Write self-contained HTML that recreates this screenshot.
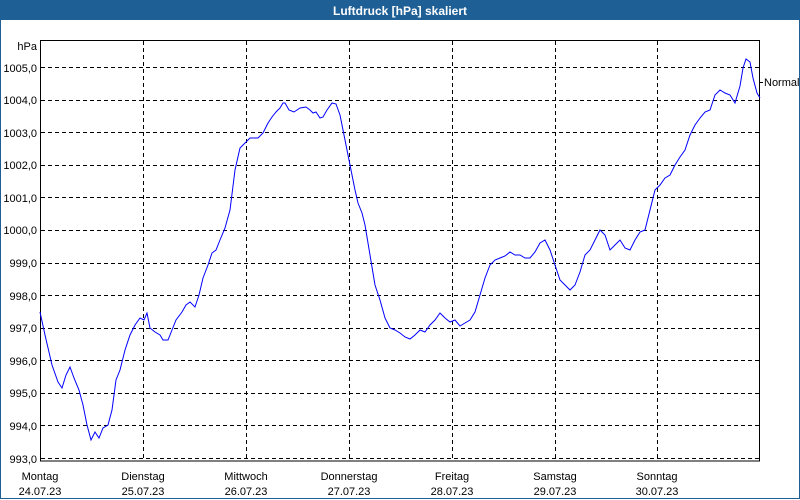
<!DOCTYPE html>
<html><head><style>
body{margin:0;width:800px;height:500px;overflow:hidden;background:#fff;font-family:"Liberation Sans",sans-serif;}
.wrap{position:absolute;left:0;top:0;width:798px;height:498px;border:1px solid #1e5f96;border-top:none;}
</style></head><body>
<div class="wrap"></div>
<svg width="800" height="500" style="position:absolute;left:0;top:0" font-family="Liberation Sans, sans-serif">
<rect x="0" y="0" width="800" height="20" fill="#1e5f96"/>
<text x="400" y="15" text-anchor="middle" fill="#fff" font-size="12" font-weight="bold">Luftdruck [hPa] skaliert</text>
<rect x="40.5" y="40.5" width="719" height="420.5" fill="none" stroke="#000" stroke-width="1"/>
<g stroke="#000" stroke-dasharray="4,3" stroke-width="1">
<line x1="41" x2="760" y1="67.5" y2="67.5"/><line x1="41" x2="760" y1="100.5" y2="100.5"/>
<line x1="41" x2="760" y1="132.5" y2="132.5"/><line x1="41" x2="760" y1="165.5" y2="165.5"/>
<line x1="41" x2="760" y1="197.5" y2="197.5"/><line x1="41" x2="760" y1="230.5" y2="230.5"/>
<line x1="41" x2="760" y1="263.5" y2="263.5"/><line x1="41" x2="760" y1="295.5" y2="295.5"/>
<line x1="41" x2="760" y1="328.5" y2="328.5"/><line x1="41" x2="760" y1="360.5" y2="360.5"/>
<line x1="41" x2="760" y1="393.5" y2="393.5"/><line x1="41" x2="760" y1="425.5" y2="425.5"/>
<line x1="41" x2="760" y1="458.5" y2="458.5"/>
<line x1="143.5" x2="143.5" y1="41" y2="461"/><line x1="246.5" x2="246.5" y1="41" y2="461"/>
<line x1="349.5" x2="349.5" y1="41" y2="461"/><line x1="452.5" x2="452.5" y1="41" y2="461"/>
<line x1="555.5" x2="555.5" y1="41" y2="461"/><line x1="657.5" x2="657.5" y1="41" y2="461"/>
</g>
<line x1="760" x2="763" y1="82.5" y2="82.5" stroke="#000"/>
<g font-size="11" fill="#000" text-anchor="end">
<text x="37" y="50">hPa</text>
<text x="37" y="72">1005,0</text><text x="37" y="104">1004,0</text><text x="37" y="137">1003,0</text>
<text x="37" y="169">1002,0</text><text x="37" y="202">1001,0</text><text x="37" y="234">1000,0</text>
<text x="37" y="267">999,0</text><text x="37" y="300">998,0</text><text x="37" y="332">997,0</text>
<text x="37" y="365">996,0</text><text x="37" y="397">995,0</text><text x="37" y="430">994,0</text>
<text x="37" y="463">993,0</text>
</g>
<text x="764" y="86" font-size="11">Normal</text>
<g font-size="11" text-anchor="middle">
<text x="40" y="480">Montag</text><text x="40" y="495">24.07.23</text>
<text x="143" y="480">Dienstag</text><text x="143" y="495">25.07.23</text>
<text x="246" y="480">Mittwoch</text><text x="246" y="495">26.07.23</text>
<text x="349" y="480">Donnerstag</text><text x="349" y="495">27.07.23</text>
<text x="452" y="480">Freitag</text><text x="452" y="495">28.07.23</text>
<text x="555" y="480">Samstag</text><text x="555" y="495">29.07.23</text>
<text x="657" y="480">Sonntag</text><text x="657" y="495">30.07.23</text>
</g>
<polyline fill="none" stroke="#0000ff" stroke-width="1" points="40,312 45,335 52,365 58,382 62,388 66,375 70,367 74,378 79,390 83,405 87,425 91,440 95,432 99,438 103,428 108,425 112,410 116,380 120,370 125,350 130,335 135,325 140,318 144,320 147,313 150,328 155,332 160,335 163,340 168,340 172,330 176,320 182,312 186,305 190,302 195,307 199,295 203,278 208,265 212,253 216,250 220,240 225,228 230,210 235,170 240,148 245,143 250,138 258,138 263,133 268,123 272,117 276,112 280,108 283,103 285,103 289,110 294,112 300,108 306,107 310,110 313,113 316,112 320,118 323,117 327,110 332,103 336,104 340,115 345,140 350,165 355,190 358,203 362,213 365,225 370,255 375,285 380,300 385,318 390,328 395,330 400,333 405,337 410,339 415,335 420,330 425,332 430,325 435,320 440,313 445,318 450,322 455,320 460,326 465,323 470,320 475,312 480,295 485,278 490,265 495,260 500,258 505,256 510,252 515,255 520,255 525,258 530,258 535,252 540,243 545,240 550,250 555,265 560,280 565,285 570,290 575,285 580,272 585,255 590,250 595,240 600,230 605,235 610,250 615,245 620,240 625,248 630,250 635,240 640,232 645,230 650,210 655,190 660,185 665,178 670,175 675,165 680,157 685,150 690,135 695,125 700,118 705,112 710,110 715,95 720,90 725,93 730,95 735,103 740,86 743,68 746,59 750,62 753,78 757,93 760,98"/>
</svg>
</body></html>
